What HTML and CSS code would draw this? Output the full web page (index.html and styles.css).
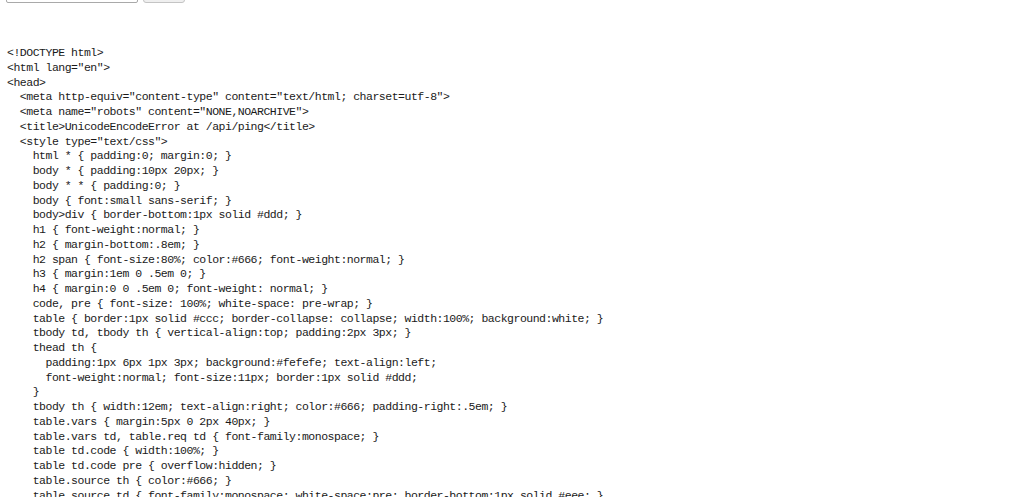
FILE: index.html
```html
<!DOCTYPE html>
<html lang="en">
<head>
<meta charset="utf-8">
<title>Source</title>
<link rel="stylesheet" href="styles.css">
</head>
<body>
<form class="bar">
  <input class="field" type="text">
  <button class="btn" type="button" aria-label="Go"></button>
</form>
<pre class="source">&lt;!DOCTYPE html&gt;
&lt;html lang="en"&gt;
&lt;head&gt;
  &lt;meta http-equiv="content-type" content="text/html; charset=utf-8"&gt;
  &lt;meta name="robots" content="NONE,NOARCHIVE"&gt;
  &lt;title&gt;UnicodeEncodeError at /api/ping&lt;/title&gt;
  &lt;style type="text/css"&gt;
    html * { padding:0; margin:0; }
    body * { padding:10px 20px; }
    body * * { padding:0; }
    body { font:small sans-serif; }
    body&gt;div { border-bottom:1px solid #ddd; }
    h1 { font-weight:normal; }
    h2 { margin-bottom:.8em; }
    h2 span { font-size:80%; color:#666; font-weight:normal; }
    h3 { margin:1em 0 .5em 0; }
    h4 { margin:0 0 .5em 0; font-weight: normal; }
    code, pre { font-size: 100%; white-space: pre-wrap; }
    table { border:1px solid #ccc; border-collapse: collapse; width:100%; background:white; }
    tbody td, tbody th { vertical-align:top; padding:2px 3px; }
    thead th {
      padding:1px 6px 1px 3px; background:#fefefe; text-align:left;
      font-weight:normal; font-size:11px; border:1px solid #ddd;
    }
    tbody th { width:12em; text-align:right; color:#666; padding-right:.5em; }
    table.vars { margin:5px 0 2px 40px; }
    table.vars td, table.req td { font-family:monospace; }
    table td.code { width:100%; }
    table td.code pre { overflow:hidden; }
    table.source th { color:#666; }
    table.source td { font-family:monospace; white-space:pre; border-bottom:1px solid #eee; }
</pre>
</body>
</html>
```

FILE: styles.css
```css
html, body {
  margin: 0;
  padding: 0;
  background: #fff;
  overflow: hidden;
}

.bar {
  display: flex;
  align-items: flex-end;
  gap: 5px;
  margin: -19px 0 0 6px;
  height: 22px;
}

.field {
  box-sizing: border-box;
  width: 132px;
  height: 22px;
  margin: 0;
  border: 1px solid #a9a9a9;
  border-radius: 2px;
  background: #fff;
}

.btn {
  box-sizing: border-box;
  width: 42px;
  height: 22px;
  margin: 0;
  padding: 0;
  border: 1px solid #c4c4c4;
  border-radius: 3px;
  background: #efefef;
}

.source {
  margin: 43px 0 0 7px;
  font-family: "Liberation Mono", "DejaVu Sans Mono", monospace;
  font-size: 11.5px;
  letter-spacing: -0.49px;
  line-height: 14.75px;
  color: #1a1a1a;
  white-space: pre;
}
```
